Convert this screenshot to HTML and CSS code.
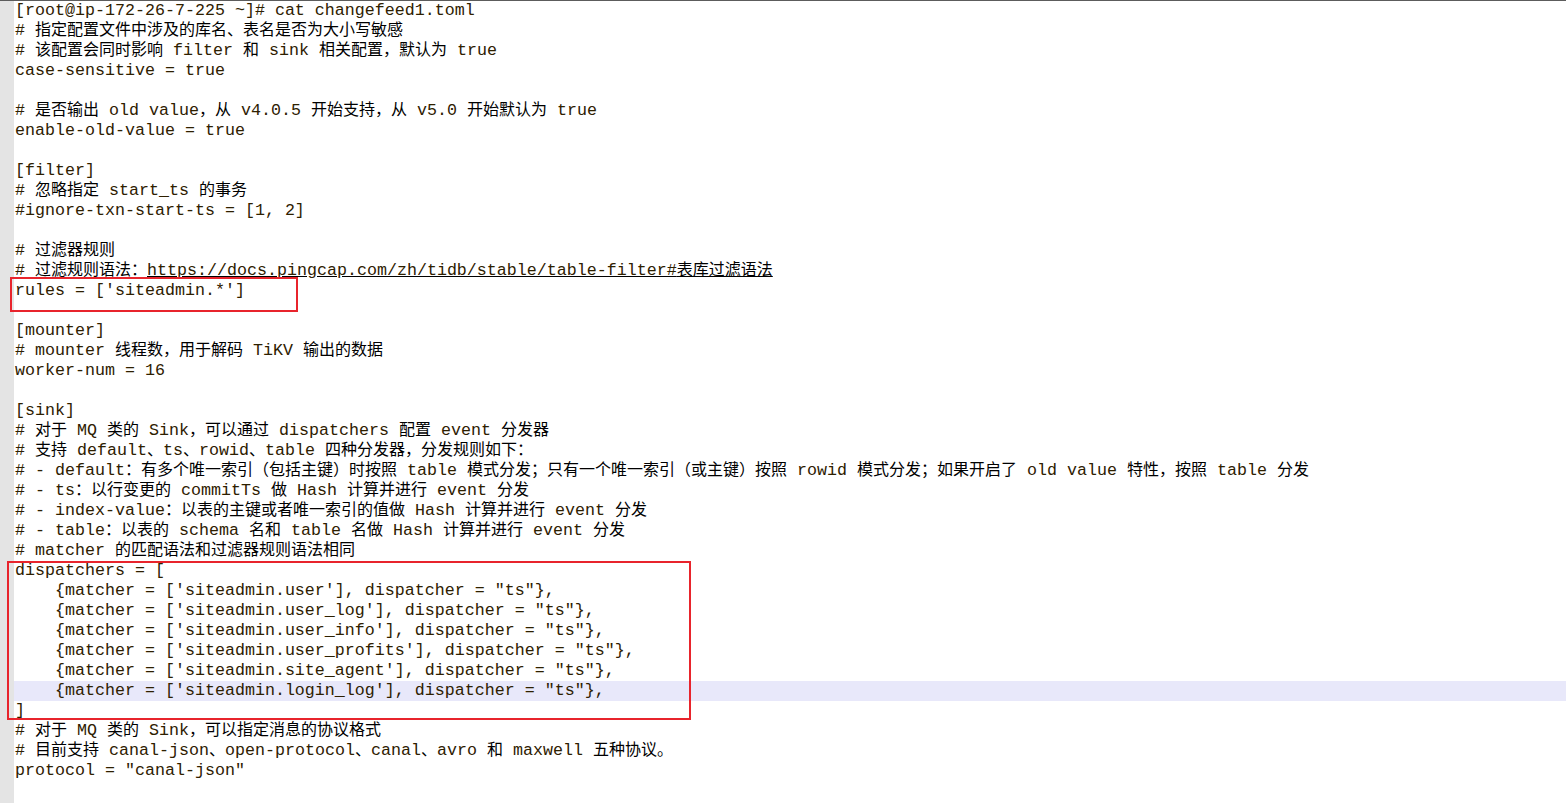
FILE: index.html
```html
<!DOCTYPE html>
<html>
	<head>
		<meta charset="UTF-8">
		<title>changefeed1.toml</title>
		<link rel="stylesheet" href="styles.css">
	</head>
	<body>
		<div class="editor">
			<div class="gutter"></div>
			<div class="code">
				<div class="ln">[root@ip-172-26-7-225 ~]# cat changefeed1.toml</div>
				<div class="ln"># <span class="zh">指定配置文件中涉及的库名、表名是否为大小写敏感</span></div>
				<div class="ln"># <span class="zh">该配置会同时影响</span> filter <span class="zh">和</span> sink <span class="zh">相关配置，默认为</span> true</div>
				<div class="ln">case-sensitive = true</div>
				<div class="ln"></div>
				<div class="ln"># <span class="zh">是否输出</span> old value<span class="zh">，从</span> v4.0.5 <span class="zh">开始支持，从</span> v5.0 <span class="zh">开始默认为</span> true</div>
				<div class="ln">enable-old-value = true</div>
				<div class="ln"></div>
				<div class="ln">[filter]</div>
				<div class="ln"># <span class="zh">忽略指定</span> start_ts <span class="zh">的事务</span></div>
				<div class="ln">#ignore-txn-start-ts = [1, 2]</div>
				<div class="ln"></div>
				<div class="ln"># <span class="zh">过滤器规则</span></div>
				<div class="ln"># <span class="zh">过滤规则语法：</span><span class="url">https://docs.pingcap.com/zh/tidb/stable/table-filter#<span class="zh">表库过滤语法</span></span></div>
				<div class="ln">rules = ['siteadmin.*']</div>
				<div class="ln"></div>
				<div class="ln">[mounter]</div>
				<div class="ln"># mounter <span class="zh">线程数，用于解码</span> TiKV <span class="zh">输出的数据</span></div>
				<div class="ln">worker-num = 16</div>
				<div class="ln"></div>
				<div class="ln">[sink]</div>
				<div class="ln"># <span class="zh">对于</span> MQ <span class="zh">类的</span> Sink<span class="zh">，可以通过</span> dispatchers <span class="zh">配置</span> event <span class="zh">分发器</span></div>
				<div class="ln"># <span class="zh">支持</span> default<span class="zh">、</span>ts<span class="zh">、</span>rowid<span class="zh">、</span>table <span class="zh">四种分发器，分发规则如下：</span></div>
				<div class="ln"># - default<span class="zh">：有多个唯一索引（包括主键）时按照</span> table <span class="zh">模式分发；只有一个唯一索引（或主键）按照</span> rowid <span class="zh">模式分发；如果开启了</span> old value <span class="zh">特性，按照</span> table <span class="zh">分发</span></div>
				<div class="ln"># - ts<span class="zh">：以行变更的</span> commitTs <span class="zh">做</span> Hash <span class="zh">计算并进行</span> event <span class="zh">分发</span></div>
				<div class="ln"># - index-value<span class="zh">：以表的主键或者唯一索引的值做</span> Hash <span class="zh">计算并进行</span> event <span class="zh">分发</span></div>
				<div class="ln"># - table<span class="zh">：以表的</span> schema <span class="zh">名和</span> table <span class="zh">名做</span> Hash <span class="zh">计算并进行</span> event <span class="zh">分发</span></div>
				<div class="ln"># matcher <span class="zh">的匹配语法和过滤器规则语法相同</span></div>
				<div class="ln">dispatchers = [</div>
				<div class="ln">    {matcher = ['siteadmin.user'], dispatcher = "ts"},</div>
				<div class="ln">    {matcher = ['siteadmin.user_log'], dispatcher = "ts"},</div>
				<div class="ln">    {matcher = ['siteadmin.user_info'], dispatcher = "ts"},</div>
				<div class="ln">    {matcher = ['siteadmin.user_profits'], dispatcher = "ts"},</div>
				<div class="ln">    {matcher = ['siteadmin.site_agent'], dispatcher = "ts"},</div>
				<div class="ln current">    {matcher = ['siteadmin.login_log'], dispatcher = "ts"},</div>
				<div class="ln">]</div>
				<div class="ln"># <span class="zh">对于</span> MQ <span class="zh">类的</span> Sink<span class="zh">，可以指定消息的协议格式</span></div>
				<div class="ln"># <span class="zh">目前支持</span> canal-json<span class="zh">、</span>open-protocol<span class="zh">、</span>canal<span class="zh">、</span>avro <span class="zh">和</span> maxwell <span class="zh">五种协议。</span></div>
				<div class="ln">protocol = "canal-json"</div>
			</div>
			<div class="mark mark-rules"></div>
			<div class="mark mark-disp"></div>
		</div>
	</body>
</html>
```

FILE: styles.css
```css
*{
	margin: 0;
	padding: 0;
}
html,body{
	height: 100%;
	background: #fff;
	overflow: hidden;
}
.editor{
	position: relative;
	display: flex;
	height: 100%;
	border-top: 1px solid #5c5c5c;
	box-sizing: border-box;
}
.gutter{
	width: 14px;
	flex: none;
	background: #e4e4e4;
}
.code{
	flex: 1;
	font-family: "Liberation Mono", "Noto Sans CJK SC", monospace;
	font-size: 16.67px;
	color: #2e2000;
}
.ln{
	height: 20px;
	line-height: 20px;
	padding-left: 1px;
	white-space: pre;
}
.current{
	background: #e8e8fa;
}
.zh{
	font-family: "Noto Sans CJK SC", sans-serif;
	font-size: 16px;
	line-height: 14px;
	color: #000;
}
.url{
	text-decoration: underline;
	text-decoration-color: #000;
}
.mark{
	position: absolute;
	border: 2px solid #e8242c;
}
.mark-rules{
	left: 10px;
	top: 276px;
	width: 284px;
	height: 31px;
}
.mark-disp{
	left: 7px;
	top: 560px;
	width: 680px;
	height: 155px;
}
```
